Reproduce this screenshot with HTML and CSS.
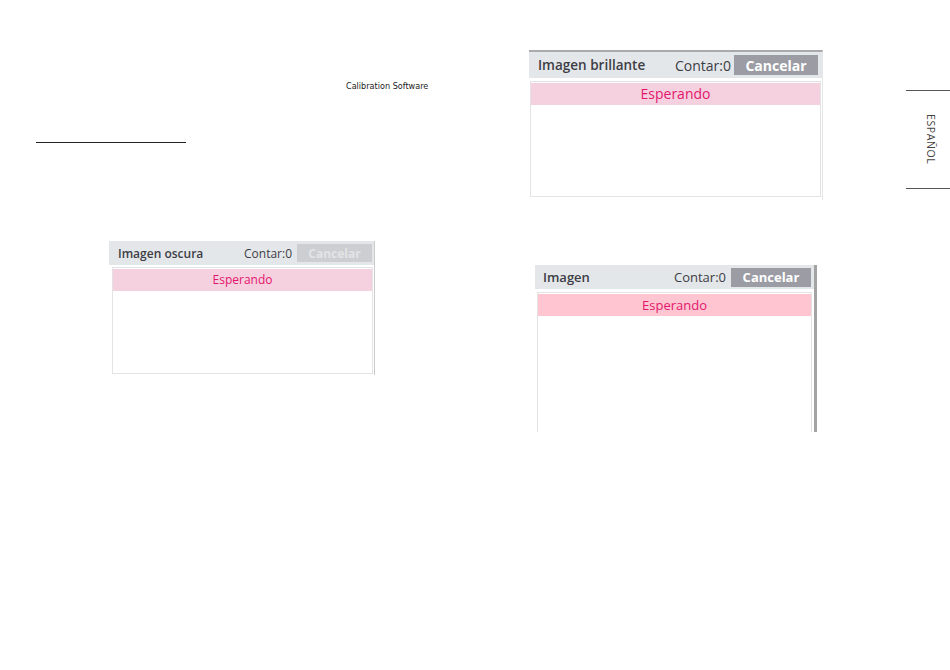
FILE: index.html
```html
<!DOCTYPE html>
<html>
<head>
    <title>Calibration Software</title>
    <link rel="stylesheet" href="styles.css">
</head>
<body>
    <div class="page">
        <div class="col-left">
            <div class="doc-label">Calibration Software</div>
            <div class="doc-rule"></div>

            <div class="shot shot-dark">
                <div class="shot-head">
                    <span class="shot-title">Imagen oscura</span>
                    <span class="shot-count">Contar:0</span>
                    <span class="shot-btn">Cancelar</span>
                </div>
                <div class="shot-body">
                    <div class="shot-status">Esperando</div>
                </div>
            </div>
        </div>

        <div class="col-right">
            <div class="shot shot-bright">
                <div class="shot-head">
                    <span class="shot-title">Imagen brillante</span>
                    <span class="shot-count">Contar:0</span>
                    <span class="shot-btn">Cancelar</span>
                </div>
                <div class="shot-body">
                    <div class="shot-status">Esperando</div>
                </div>
            </div>

            <div class="shot shot-image">
                <div class="shot-head">
                    <span class="shot-title">Imagen</span>
                    <span class="shot-count">Contar:0</span>
                    <span class="shot-btn">Cancelar</span>
                </div>
                <div class="shot-body">
                    <div class="shot-status">Esperando</div>
                </div>
            </div>
        </div>

        <div class="side-tab">
            <span class="side-label">ESPAÑOL</span>
        </div>
    </div>
</body>
</html>
```

FILE: styles.css
```css
body {
    margin: 0;
    background: #fff;
    font-family: 'Open Sans', 'Noto Sans', sans-serif;
    color: #333;
}

.page {
    display: flex;
    width: 950px;
    height: 670px;
    overflow: hidden;
}

.col-left {
    flex: none;
    width: 529px;
}

.col-right {
    flex: none;
    width: 377px;
}

.doc-label {
    margin-top: 81px;
    padding-left: 346px;
    font-family: 'Liberation Sans Narrow', 'DejaVu Sans Condensed', sans-serif;
    font-size: 9px;
    line-height: 11px;
    color: #222;
}

.doc-rule {
    margin: 50px 0 0 36px;
    width: 150px;
    height: 1px;
    background: #222;
}

/* screenshot panels */
.shot {
    display: flex;
    flex-direction: column;
    box-sizing: border-box;
    overflow: hidden;
}

.shot-head {
    display: flex;
    align-items: center;
    flex: none;
    background: #e4e7ea;
}

.shot-title {
    flex: 1;
    font-weight: 600;
    color: #3d3d45;
}

.shot-count {
    color: #3d3d45;
}

.shot-btn {
    display: flex;
    align-items: center;
    justify-content: center;
    font-weight: 700;
    color: #fff;
    background: #9b9ca4;
}

.shot-body {
    flex: 1;
    border: 1px solid #e3e3e3;
    background: #fff;
}

.shot-status {
    text-align: center;
    background: #f5d0de;
    color: #e3166e;
}

/* dark image panel */
.shot-dark {
    margin: 98px 0 0 109px;
    width: 266px;
    height: 134px;
    border-right: 1px solid #cbcbcb;
}

.shot-dark .shot-head {
    height: 24px;
    padding-left: 9px;
    font-size: 12px;
}

.shot-dark .shot-count {
    margin-right: 5px;
}

.shot-dark .shot-btn {
    width: 75px;
    height: 18px;
    margin-right: 2px;
    background: #ccced1;
    color: #e2e4e7;
}

.shot-dark .shot-body {
    margin: 2px 1px 1px 3px;
    padding-top: 1px;
}

.shot-dark .shot-status {
    height: 22px;
    line-height: 22px;
    font-size: 12px;
}

/* bright image panel */
.shot-bright {
    margin-top: 50px;
    width: 294px;
    height: 150px;
    border-top: 2px solid #a8aaae;
    border-right: 1px solid #e6e6e6;
}

.shot-bright .shot-head {
    height: 26px;
    padding-left: 9px;
    font-size: 13.5px;
}

.shot-bright .shot-count {
    font-size: 14px;
    margin-right: 3px;
}

.shot-bright .shot-btn {
    width: 84px;
    height: 20px;
    margin-right: 4px;
    font-size: 14px;
}

.shot-bright .shot-body {
    margin: 3px 1px 3px 1px;
    padding-top: 1px;
}

.shot-bright .shot-status {
    height: 22px;
    line-height: 22px;
    font-size: 14px;
}

/* generic image panel */
.shot-image {
    margin: 65px 0 0 6px;
    width: 282px;
    height: 167px;
    border-right: 3px solid #a3a3a3;
}

.shot-image .shot-head {
    height: 24px;
    padding-left: 8px;
    font-size: 13px;
}

.shot-image .shot-count {
    margin-right: 5px;
}

.shot-image .shot-btn {
    width: 80px;
    height: 19px;
    margin-right: 3px;
}

.shot-image .shot-body {
    margin: 3px 2px 0 2px;
    padding-top: 1px;
    border-bottom: none;
}

.shot-image .shot-status {
    height: 22px;
    line-height: 22px;
    font-size: 13px;
    background: #ffc6d2;
}

/* language tab */
.side-tab {
    flex: none;
    width: 44px;
    height: 99px;
    margin-top: 90px;
    border-top: 1px solid #555;
    border-bottom: 1px solid #555;
    display: flex;
    justify-content: center;
    padding: 23px 0 0 5px;
    box-sizing: border-box;
}

.side-label {
    writing-mode: vertical-rl;
    font-size: 10.5px;
    letter-spacing: 0.6px;
    color: #444;
}
```
